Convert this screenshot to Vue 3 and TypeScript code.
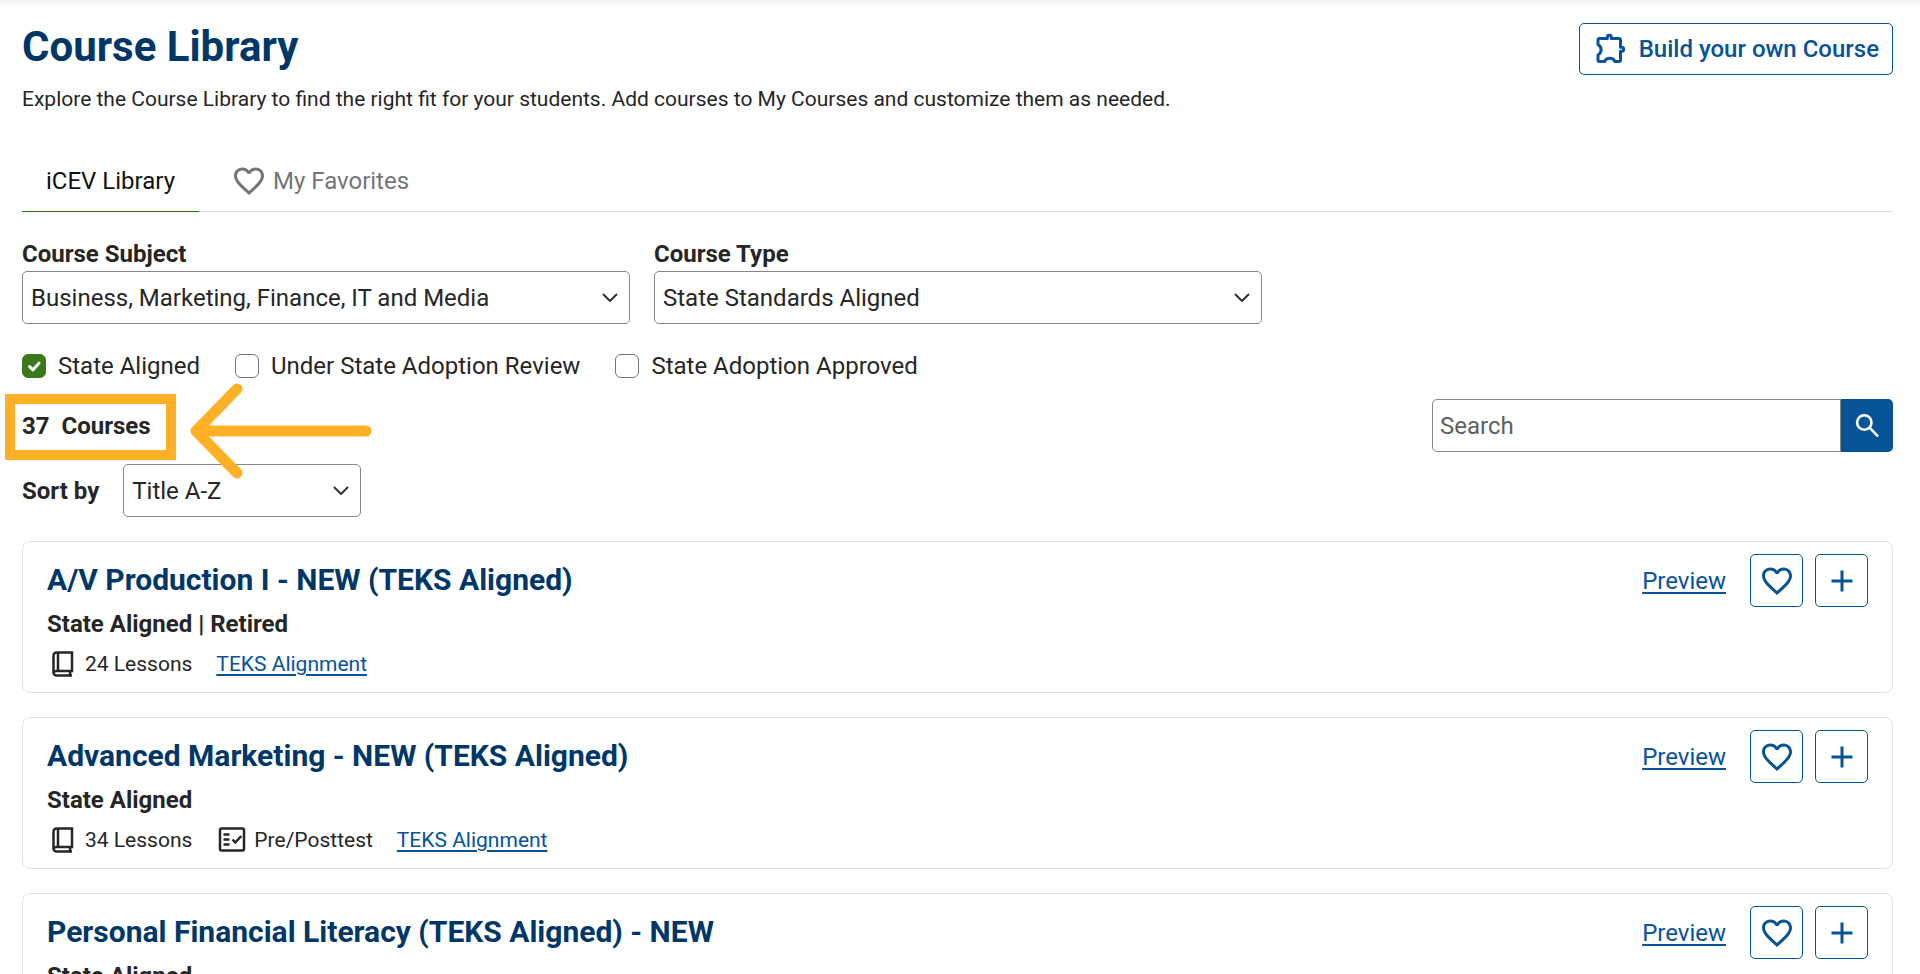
<script setup lang="ts">
import { ref } from 'vue'

interface Course {
  title: string
  status: string
  lessons: number
  prePost: boolean
}

const subject = ref('Business, Marketing, Finance, IT and Media')
const courseType = ref('State Standards Aligned')
const sort = ref('Title A-Z')
const search = ref('')

const filters = ref([
  { id: 'aligned', label: 'State Aligned', checked: true },
  { id: 'review', label: 'Under State Adoption Review', checked: false },
  { id: 'approved', label: 'State Adoption Approved', checked: false },
])

const courses: Course[] = [
  { title: 'A/V Production I - NEW (TEKS Aligned)', status: 'State Aligned | Retired', lessons: 24, prePost: false },
  { title: 'Advanced Marketing - NEW (TEKS Aligned)', status: 'State Aligned', lessons: 34, prePost: true },
  { title: 'Personal Financial Literacy (TEKS Aligned) - NEW', status: 'State Aligned', lessons: 30, prePost: true },
]

const heart =
  'M16.5 3c-1.74 0-3.41.81-4.5 2.09C10.91 3.81 9.24 3 7.5 3 4.42 3 2 5.42 2 8.5c0 3.78 3.4 6.86 8.55 11.54L12 21.35l1.45-1.32C18.6 15.36 22 12.28 22 8.5 22 5.42 19.58 3 16.5 3zm-4.4 15.55l-.1.1-.1-.1C7.14 14.24 4 11.39 4 8.5 4 6.5 5.5 5 7.5 5c1.54 0 3.04.99 3.57 2.36h1.87C13.46 5.99 14.96 5 16.5 5c2 0 3.5 1.5 3.5 3.5 0 2.89-3.14 5.74-7.9 10.05z'
</script>

<template>
  <main class="page">
    <header class="head">
      <div>
        <h1>Course Library</h1>
        <p class="intro">
          Explore the Course Library to find the right fit for your students. Add courses to My Courses and customize them as needed.
        </p>
      </div>
      <button type="button" class="build">
        <svg class="icon" viewBox="0 0 36 36" aria-hidden="true">
          <path
            d="M7.500 7.500H15.300V6.300a2 2 0 0 1 4 0V7.500H27a1.500 1.500 0 0 1 1.500 1.500V16.200h1.200a2 2 0 0 1 0 4H28.500V29a1.500 1.500 0 0 1-1.500 1.500H23a5.800 5.800 0 0 0-10.500 0H7.500A1.500 1.500 0 0 1 6 29V24a6 6 0 0 0 0-10.500V9a1.500 1.500 0 0 1 1.500-1.500z"
            fill="none" stroke="currentColor" stroke-width="3" stroke-linejoin="round"
          />
        </svg>
        Build your own Course
      </button>
    </header>

    <nav class="tabs">
      <button type="button" class="tab active">iCEV Library</button>
      <button type="button" class="tab">
        <svg class="icon" viewBox="0 0 24 24" aria-hidden="true"><path :d="heart" fill="currentColor" /></svg>
        My Favorites
      </button>
    </nav>

    <div class="fields">
      <div class="field">
        <label for="subject">Course Subject</label>
        <div class="select">
          <select id="subject" v-model="subject"><option>Business, Marketing, Finance, IT and Media</option></select>
          <svg class="chevron" viewBox="0 0 16 16" aria-hidden="true"><path d="M1.500 4.500l6.500 6.500 6.500-6.500" /></svg>
        </div>
      </div>
      <div class="field">
        <label for="type">Course Type</label>
        <div class="select">
          <select id="type" v-model="courseType"><option>State Standards Aligned</option></select>
          <svg class="chevron" viewBox="0 0 16 16" aria-hidden="true"><path d="M1.500 4.500l6.500 6.500 6.500-6.500" /></svg>
        </div>
      </div>
    </div>

    <div class="filters">
      <label v-for="f in filters" :key="f.id" :for="f.id" class="check">
        <span class="box">
          <input :id="f.id" v-model="f.checked" type="checkbox" />
          <svg v-if="f.checked" viewBox="0 0 24 24" aria-hidden="true"><path d="M7.500 12.500l3.500 3.300 6-6.600" /></svg>
        </span>
        {{ f.label }}
      </label>
    </div>

    <div class="results">
      <div class="count">
        <span>37</span><span>Courses</span>
        <div class="callout"></div>
        <svg class="arrow" viewBox="0 0 182 96" aria-hidden="true"><path d="M47 6L6 48l41 42M6 48h170" /></svg>
      </div>
      <form class="search" @submit.prevent>
        <input v-model="search" type="text" placeholder="Search" aria-label="Search" />
        <button type="submit" aria-label="Search courses">
          <svg class="icon" viewBox="0 0 36 36" aria-hidden="true">
            <circle cx="15.300" cy="14.500" r="7.200" /><path d="M20.500 19.700l8.500 8.600" />
          </svg>
        </button>
      </form>
    </div>

    <div class="sort">
      <label for="sort">Sort by</label>
      <div class="select">
        <select id="sort" v-model="sort"><option>Title A-Z</option></select>
        <svg class="chevron" viewBox="0 0 16 16" aria-hidden="true"><path d="M1.500 4.500l6.500 6.500 6.500-6.500" /></svg>
      </div>
    </div>

    <section class="list">
      <article v-for="c in courses" :key="c.title" class="card">
        <div class="info">
          <h2>{{ c.title }}</h2>
          <p class="status">{{ c.status }}</p>
          <div class="meta">
            <span class="item">
              <svg class="glyph" viewBox="0 0 32 32" aria-hidden="true">
                <path d="M25 4.500H9.500A3 3 0 0 0 6.500 7.500V24.500a3 3 0 0 0 3 3H25M25 3.300V23H9.500a3 3 0 0 0-3 2M11 5V22.500M23.500 23.500q-1 2 0 4" />
              </svg>
              {{ c.lessons }} Lessons
            </span>
            <span v-if="c.prePost" class="item">
              <svg class="glyph" viewBox="0 0 32 32" aria-hidden="true">
                <rect x="4" y="4.500" width="24" height="22" rx="1.500" />
                <path d="M7.500 10.500h6M7.500 15.500h6M7.500 20.500h6M16.500 15.500l2.800 3 6-6.500" />
              </svg>
              Pre/Posttest
            </span>
            <a href="#">TEKS Alignment</a>
          </div>
        </div>
        <div class="actions">
          <a href="#">Preview</a>
          <button type="button" aria-label="Add to favorites">
            <svg class="icon" viewBox="0 0 24 24" aria-hidden="true"><path :d="heart" fill="currentColor" /></svg>
          </button>
          <button type="button" aria-label="Add course">
            <svg class="icon" viewBox="0 0 24 24" aria-hidden="true"><path d="M19 13h-6v6h-2v-6H5v-2h6V5h2v6h6z" fill="currentColor" /></svg>
          </button>
        </div>
      </article>
    </section>
  </main>
</template>

<style>
body {
  background: #fff;
}
</style>

<style scoped>
* {
  box-sizing: border-box;
}
.page {
  font-family: Roboto, 'Liberation Sans', sans-serif;
  font-size: 24px;
  line-height: 32px;
  color: #262626;
  padding: 23px 27px 24px 22px;
  background: linear-gradient(#f0f0f0, #fff 6px);
}
h1, h2, p {
  margin: 0;
}
button, input, select {
  font: inherit;
}
button {
  cursor: pointer;
}
a {
  color: #065397;
  text-underline-offset: 3px;
}
.icon {
  width: 36px;
  height: 36px;
  flex: none;
}
.head {
  display: flex;
  justify-content: space-between;
  align-items: flex-start;
}
h1 {
  font-size: 42px;
  line-height: 48px;
  font-weight: 700;
  color: #003768;
}
.intro {
  font-size: 21px;
  line-height: 28px;
  margin-top: 14px;
}
.build {
  display: flex;
  align-items: center;
  gap: 11px;
  height: 52px;
  padding: 0 13px 0 12px;
  color: #065397;
  font-weight: 500;
  background: #fff;
  border: 1px solid #065397;
  border-radius: 5px;
}
.tabs {
  display: flex;
  height: 62px;
  margin-top: 37px;
  border-bottom: 1px solid #e0e0e0;
}
.tab {
  display: flex;
  align-items: center;
  gap: 6px;
  height: 62px;
  padding: 0 24px;
  border: 0;
  background: none;
  color: #757575;
}
.tab + .tab {
  padding-left: 32px;
}
.active {
  color: #111;
  border-bottom: 1px solid #2f6f14;
}
.fields {
  display: flex;
  gap: 24px;
  margin-top: 26px;
}
.field {
  flex: 0 1 608px;
}
.field label, .sort label, .count, .status {
  font-weight: 700;
}
.field label {
  display: block;
  line-height: 33px;
}
.select {
  display: grid;
  align-items: center;
}
.select > * {
  grid-area: 1 / 1;
}
select {
  appearance: none;
  width: 100%;
  height: 53px;
  padding: 0 40px 0 8px;
  color: #262626;
  background: #fff;
  border: 1px solid #868686;
  border-radius: 5px;
}
.chevron {
  justify-self: end;
  width: 16px;
  height: 16px;
  margin-right: 12px;
  pointer-events: none;
  fill: none;
  stroke: #333;
  stroke-width: 2;
  stroke-linecap: round;
  stroke-linejoin: round;
}
.filters {
  display: flex;
  gap: 35px;
  margin-top: 26px;
}
.check {
  display: flex;
  align-items: center;
  gap: 12px;
}
.box {
  display: grid;
}
.box > * {
  grid-area: 1 / 1;
  width: 24px;
  height: 24px;
}
.box input {
  appearance: none;
  margin: 0;
  border: 1px solid #757575;
  border-radius: 6px;
}
.box input:checked {
  background: #3b7a1c;
  border-color: #3b7a1c;
}
.box svg {
  pointer-events: none;
  fill: none;
  stroke: #fff;
  stroke-width: 3;
  stroke-linecap: round;
  stroke-linejoin: round;
}
.results {
  display: flex;
  align-items: center;
  justify-content: space-between;
  margin-top: 17px;
}
.count {
  position: relative;
  display: flex;
  gap: 12px;
}
.callout {
  position: absolute;
  top: -16px;
  left: -17px;
  width: 171px;
  height: 66px;
  border: 10px solid #ffb024;
}
.arrow {
  position: absolute;
  top: -27px;
  left: 168px;
  width: 182px;
  height: 96px;
  z-index: 1;
  pointer-events: none;
  fill: none;
  stroke: #ffb024;
  stroke-width: 11;
  stroke-linecap: round;
  stroke-linejoin: round;
}
.search {
  display: flex;
  flex: 0 1 461px;
}
.search input {
  flex: 1;
  min-width: 0;
  height: 53px;
  padding: 0 7px;
  border: 1px solid #868686;
  border-radius: 5px 0 0 5px;
}
.search input::placeholder {
  color: #606060;
}
.search button {
  display: grid;
  place-items: center;
  width: 52px;
  padding: 0;
  border: 0;
  border-radius: 0 5px 5px 0;
  background: #065397;
}
.search svg {
  fill: none;
  stroke: #fff;
  stroke-width: 2.600;
}
.sort {
  display: flex;
  align-items: center;
  gap: 24px;
  margin-top: 12px;
}
.sort .select {
  width: 238px;
}
.list {
  display: grid;
  gap: 24px;
  margin-top: 24px;
}
.card {
  display: flex;
  justify-content: space-between;
  align-items: flex-start;
  padding: 12px 24px;
  border: 1px solid #e2e2e2;
  border-radius: 8px;
}
h2 {
  font-size: 30px;
  line-height: 52px;
  font-weight: 700;
  color: #003768;
}
.status {
  margin-top: 2px;
}
.meta {
  display: flex;
  align-items: center;
  gap: 24px;
  font-size: 21px;
  margin-top: 8px;
}
.item {
  display: flex;
  align-items: center;
  gap: 6px;
}
.glyph {
  width: 32px;
  height: 32px;
  fill: none;
  stroke: #262626;
  stroke-width: 2.500;
}
.actions {
  display: flex;
  align-items: center;
  gap: 12px;
}
.actions a {
  margin-right: 12px;
}
.actions button {
  display: grid;
  place-items: center;
  width: 53px;
  height: 53px;
  padding: 0;
  color: #065397;
  background: #fff;
  border: 1px solid #065397;
  border-radius: 5px;
}
</style>
